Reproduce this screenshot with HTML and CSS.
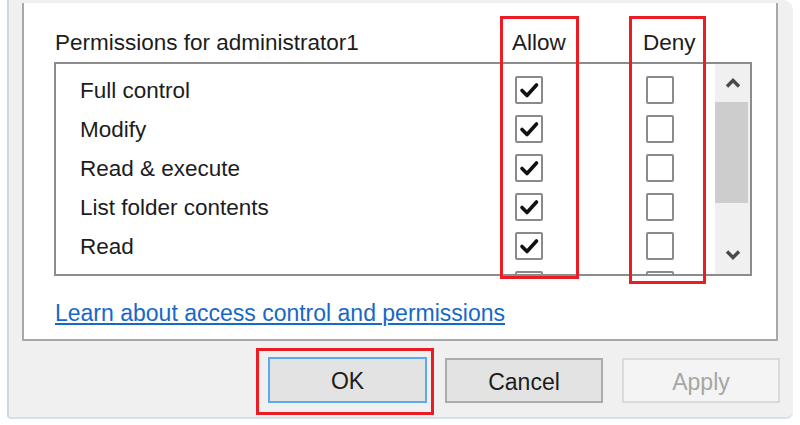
FILE: index.html
```html
<!DOCTYPE html>
<html>
<head>
<meta charset="utf-8">
<link rel="stylesheet" href="styles.css">
</head>
<body>
<div class="window">
  <div class="panel">
    <div class="perm-head">
      <span class="perm-title">Permissions for administrator1</span>
      <span class="col-allow">Allow</span>
      <span class="col-deny">Deny</span>
    </div>
    <div class="listbox">
      <div class="rows">
        <div class="row"><span class="label">Full control</span><span class="cb checked"><svg viewBox="0 0 24 24"><path d="M5 12.5 L10 17.5 L19.5 7"/></svg></span><span></span><span class="cb"></span></div>
        <div class="row"><span class="label">Modify</span><span class="cb checked"><svg viewBox="0 0 24 24"><path d="M5 12.5 L10 17.5 L19.5 7"/></svg></span><span></span><span class="cb"></span></div>
        <div class="row"><span class="label">Read &amp; execute</span><span class="cb checked"><svg viewBox="0 0 24 24"><path d="M5 12.5 L10 17.5 L19.5 7"/></svg></span><span></span><span class="cb"></span></div>
        <div class="row"><span class="label">List folder contents</span><span class="cb checked"><svg viewBox="0 0 24 24"><path d="M5 12.5 L10 17.5 L19.5 7"/></svg></span><span></span><span class="cb"></span></div>
        <div class="row"><span class="label">Read</span><span class="cb checked"><svg viewBox="0 0 24 24"><path d="M5 12.5 L10 17.5 L19.5 7"/></svg></span><span></span><span class="cb"></span></div>
        <div class="row"><span class="label"></span><span class="cb"></span><span></span><span class="cb"></span></div>
      </div>
      <div class="scrollbar">
        <div class="arrow"><svg viewBox="0 0 16 10"><path d="M2 8.5 L8 2.5 L14 8.5"/></svg></div>
        <div class="thumb"></div>
        <div class="track"></div>
        <div class="arrow"><svg viewBox="0 0 16 10"><path d="M2 1.5 L8 7.5 L14 1.5"/></svg></div>
      </div>
    </div>
    <div class="link-row"><a class="help-link" href="#">Learn about access control and permissions</a></div>
  </div>
  <div class="buttons">
    <button class="btn btn-default">OK</button>
    <button class="btn">Cancel</button>
    <button class="btn btn-disabled">Apply</button>
  </div>
</div>
<div class="mark mark-allow"></div>
<div class="mark mark-deny"></div>
<div class="mark mark-ok"></div>
</body>
</html>
```
FILE: styles.css
```css
html, body {
  margin: 0;
  padding: 0;
  background: #ffffff;
}
body {
  font-family: "Liberation Sans", Arial, sans-serif;
  color: #1c1c1c;
  width: 800px;
  height: 425px;
  overflow: hidden;
  position: relative;
}
.window {
  margin-left: 7px;
  width: 786px;
  height: 419px;
  box-sizing: border-box;
  background: #f0f0f0;
  border-left: 2px solid #c8d8ec;
  border-bottom: 2px solid #d4e0ee;
  border-radius: 0 10px 7px 4px;
  padding: 3px 0 0 13px;
}
.panel {
  width: 756px;
  height: 338px;
  box-sizing: border-box;
  background: #ffffff;
  border: 2px solid #a8a8a8;
  border-top: none;
  padding-left: 30px;
}
.perm-head {
  height: 59px;
  box-sizing: border-box;
  padding-bottom: 6px;
  display: flex;
  align-items: flex-end;
  font-size: 22.5px;
  line-height: 26px;
}
.perm-title {
  width: 457px;
  padding-left: 1px;
}
.col-allow {
  width: 131px;
}
.listbox {
  width: 698px;
  height: 214px;
  box-sizing: border-box;
  border: 2px solid #8c8c8c;
  display: flex;
  overflow: hidden;
}
.rows {
  flex: 1;
  padding-top: 6px;
}
.row {
  height: 39px;
  display: grid;
  grid-template-columns: 459px 28px 103px 28px;
  align-items: center;
  font-size: 22.5px;
}
.label {
  padding-left: 24px;
  padding-top: 3px;
}
.cb {
  width: 28px;
  height: 28px;
  box-sizing: border-box;
  border: 2px solid #8a8a8a;
  border-radius: 2px;
  background: #fff;
  display: block;
}
.cb svg {
  display: block;
  width: 24px;
  height: 24px;
}
.cb svg path {
  fill: none;
  stroke: #111;
  stroke-width: 3.6;
  stroke-linecap: round;
  stroke-linejoin: round;
}
.scrollbar {
  width: 35px;
  background: #f0f0f0;
  display: flex;
  flex-direction: column;
}
.arrow {
  height: 38px;
  display: flex;
  align-items: center;
  justify-content: center;
}
.arrow svg {
  width: 16px;
  height: 10px;
}
.arrow svg path {
  fill: none;
  stroke: #4a4a4a;
  stroke-width: 3.4;
}
.thumb {
  height: 101px;
  background: #cdcdcd;
  margin-right: 2px;
}
.track {
  flex: 1;
}
.link-row {
  padding-top: 24px;
  font-size: 23px;
  line-height: 26px;
  padding-left: 1px;
}
.help-link {
  color: #1668c9;
  text-decoration: underline;
  text-underline-offset: 2px;
}
.buttons {
  width: 758px;
  margin-top: 17px;
  display: flex;
  justify-content: flex-end;
  align-items: center;
  gap: 18px;
}
.btn {
  width: 158px;
  height: 45px;
  box-sizing: border-box;
  font-family: "Liberation Sans", Arial, sans-serif;
  font-size: 23px;
  color: #1c1c1c;
  background: #e3e3e3;
  border: 2px solid #acacac;
  padding: 3px 0 0 0;
}
.btn-default {
  width: 159px;
  height: 46px;
  border-color: #5fa8ee;
  margin-top: -1px;
}
.btn-disabled {
  background: #f4f4f4;
  border-color: #dadada;
  color: #a6a6a6;
  margin-left: 1px;
}
.mark {
  position: absolute;
  border: 3px solid #ec1c24;
  box-sizing: border-box;
}
.mark-allow {
  left: 500px;
  top: 16px;
  width: 79px;
  height: 263px;
}
.mark-deny {
  left: 629px;
  top: 16px;
  width: 77px;
  height: 268px;
}
.mark-ok {
  left: 256px;
  top: 348px;
  width: 178px;
  height: 67px;
}
```
